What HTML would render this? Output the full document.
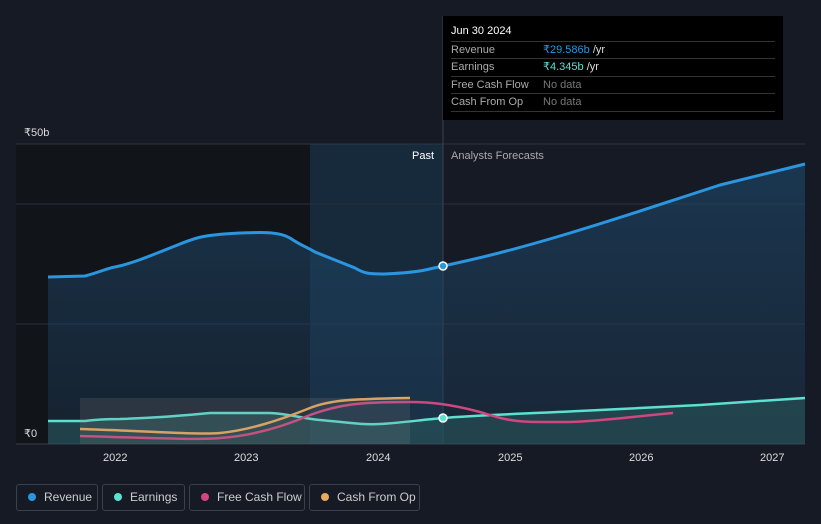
<!DOCTYPE html><html><head><style>
body{margin:0;background:#151a24;font-family:"Liberation Sans",sans-serif;width:821px;height:524px;overflow:hidden;position:relative}
.tt{position:absolute;left:443px;top:16px;width:340px;height:104px;background:#000;color:#fff;font-size:11px}
.tt .h{position:absolute;left:8px;top:9px;font-size:11px}
.row{position:absolute;left:8px;width:324px;border-top:1px solid #333;height:17px;line-height:17px;color:#aaa}
.row span{position:absolute;left:92px}
.leg{position:absolute;top:484px;height:27px;border:1px solid #3a404c;border-radius:3px;color:#ccc;font-size:12px;line-height:25px;box-sizing:border-box;white-space:nowrap}
.leg i{display:inline-block;width:8px;height:8px;border-radius:50%;margin:0 8px 0 11px;vertical-align:0px}
.ax{position:absolute;color:#ddd;font-size:11px}
</style></head><body>
<svg width="821" height="524" style="position:absolute;left:0;top:0">
<defs><linearGradient id="g" x1="0" y1="0" x2="0" y2="1"><stop offset="0" stop-color="#1e4a6e" stop-opacity=".8"/><stop offset="1" stop-color="#1e3a55" stop-opacity=".5"/></linearGradient></defs>
<rect x="16" y="144" width="294" height="300" fill="#111419"/>
<rect x="310" y="144" width="133" height="300" fill="#172a3c"/>
<line x1="16" y1="144" x2="805" y2="144" stroke="#2e3542"/>
<line x1="16" y1="204" x2="805" y2="204" stroke="#2a303c"/>
<line x1="16" y1="324" x2="805" y2="324" stroke="#2a303c"/>
<line x1="16" y1="444" x2="805" y2="444" stroke="#3a404c"/>
<line x1="443" y1="16" x2="443" y2="444" stroke="#3a4452"/>
<path d="M48,277 L85,276 C100,272 108,268 115,267 C130,264 145,258 175,246 C195,238 200,235 240,233 C265,232 280,232 290,238 C300,245 305,246 315,252 C330,258 340,262 355,268 C365,274 370,274 385,274 C400,273 410,273 425,270 L443,266 C480,258 510,251 570,233 C620,218 640,211 720,185 L805,164 L805,444 L48,444Z" fill="url(#g)" opacity=".75"/>
<path d="M48,277 L85,276 C100,272 108,268 115,267 C130,264 145,258 175,246 C195,238 200,235 240,233 C265,232 280,232 290,238 C300,245 305,246 315,252 C330,258 340,262 355,268 C365,274 370,274 385,274 C400,273 410,273 425,270 L443,266 C480,258 510,251 570,233 C620,218 640,211 720,185 L805,164" fill="none" stroke="#2b96e0" stroke-width="3"/>
<path d="M48,421 L85,421 C100,419 110,419 120,419 C150,418 180,416 210,413 L270,413 C290,414 300,418 320,420 C345,422 360,425 380,424 C400,423 420,420 443,418 C480,415 520,414 600,410 L700,405 L805,398 L805,444 L48,444Z" fill="#2a5b5e" opacity=".55"/>
<path d="M48,421 L85,421 C100,419 110,419 120,419 C150,418 180,416 210,413 L270,413 C290,414 300,418 320,420 C345,422 360,425 380,424 C400,423 420,420 443,418 C480,415 520,414 600,410 L700,405 L805,398" fill="none" stroke="#5ce0d0" stroke-width="2.5"/>
<path d="M80,436 C150,438 200,440 220,438 C250,436 280,428 310,415 C340,404 360,402 410,402 C430,402 450,404 480,412 C500,418 510,422 540,422 L570,422 C600,421 620,418 673,413" fill="none" stroke="#d0467f" stroke-width="2.5"/>
<path d="M80,429 C150,431 200,435 220,433 C250,430 280,420 310,408 C330,400 350,399 410,398" fill="none" stroke="#e8a95c" stroke-width="2.5"/>
<rect x="80" y="398" width="330" height="46" fill="#8a8a8a" opacity=".18"/>
<circle cx="443" cy="266" r="4" fill="#2b96e0" stroke="#fff" stroke-width="1.5"/>
<circle cx="443" cy="418" r="4" fill="#5ce0d0" stroke="#fff" stroke-width="1.5"/>
</svg>
<div class="ax" style="left:24px;top:126px">₹50b</div>
<div class="ax" style="left:24px;top:427px">₹0</div>
<div class="ax" style="left:412px;top:150px;color:#fff">Past</div>
<div class="ax" style="left:451px;top:150px;color:#aaa">Analysts Forecasts</div>
<div class="ax" style="left:103px;top:452px">2022</div>
<div class="ax" style="left:234px;top:452px">2023</div>
<div class="ax" style="left:366px;top:452px">2024</div>
<div class="ax" style="left:498px;top:452px">2025</div>
<div class="ax" style="left:629px;top:452px">2026</div>
<div class="ax" style="left:760px;top:452px">2027</div>
<div class="tt"><div class="h">Jun 30 2024</div>
<div class="row" style="top:25px">Revenue<span style="color:#2b96e0">₹29.586b <b style="font-weight:normal;color:#ddd">/yr</b></span></div>
<div class="row" style="top:42px">Earnings<span style="color:#5ce0d0">₹4.345b <b style="font-weight:normal;color:#ddd">/yr</b></span></div>
<div class="row" style="top:60px">Free Cash Flow<span style="color:#777">No data</span></div>
<div class="row" style="top:77px;border-bottom:1px solid #333">Cash From Op<span style="color:#777">No data</span></div>
</div>
<div class="leg" style="left:16px;width:82px"><i style="background:#2b96e0"></i>Revenue</div>
<div class="leg" style="left:102px;width:83px"><i style="background:#5ce0d0"></i>Earnings</div>
<div class="leg" style="left:189px;width:116px"><i style="background:#d0467f"></i>Free Cash Flow</div>
<div class="leg" style="left:309px;width:111px"><i style="background:#e8a95c"></i>Cash From Op</div>
</body></html>
